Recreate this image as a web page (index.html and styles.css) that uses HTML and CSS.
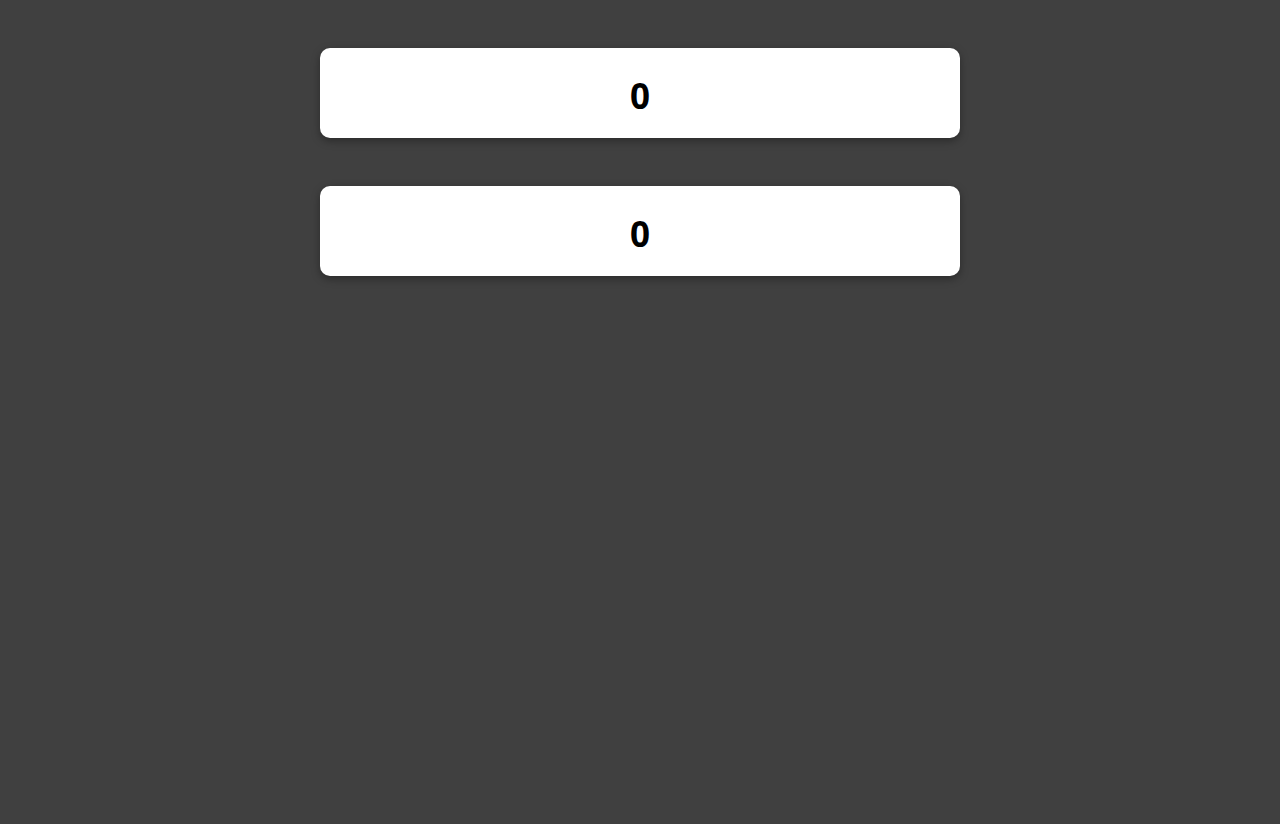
FILE: index.html
```html
<!DOCTYPE html>
<html>
<head>
<meta charset="utf-8">
<link rel="stylesheet" href="styles.css">
</head>
<body>
<main class="stack">
  <div class="card"><span class="count">0</span></div>
  <div class="card"><span class="count">0</span></div>
</main>
</body>
</html>
```
FILE: styles.css
```css
html, body {
  margin: 0;
  padding: 0;
  background: #404040;
  height: 100%;
}
body {
  font-family: "Noto Sans", sans-serif;
}
.stack {
  width: 640px;
  margin: 0 auto;
  padding-top: 48px;
  display: flex;
  flex-direction: column;
  gap: 48px;
}
.card {
  height: 90px;
  background: #fff;
  border-radius: 10px;
  box-shadow: 0 3px 8px rgba(0, 0, 0, 0.35);
  display: flex;
  align-items: center;
  justify-content: center;
}
.count {
  font-size: 35px;
  line-height: 1;
  font-weight: bold;
  color: #000;
  padding-top: 4px;
}
```
